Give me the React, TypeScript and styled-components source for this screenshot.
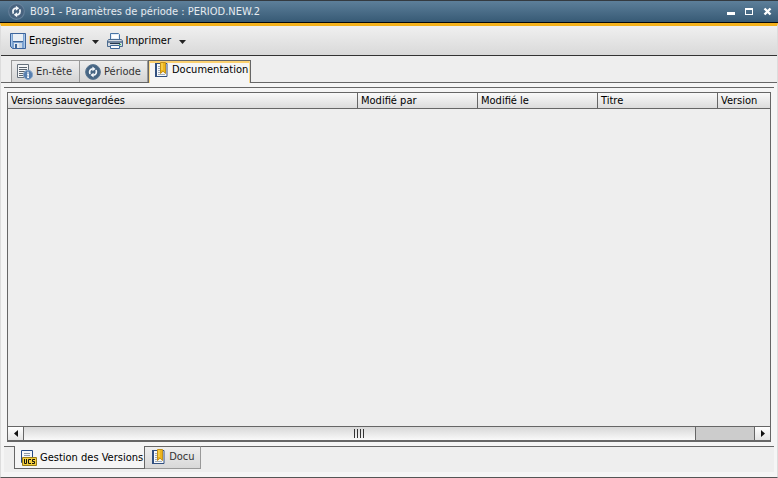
import React from "react";
import styled, { createGlobalStyle } from "styled-components";

const GlobalStyle = createGlobalStyle`
  * { box-sizing: border-box; }
  html, body { margin: 0; padding: 0; }
  body, button {
    font-family: "DejaVu Sans Condensed", "DejaVu Sans", Tahoma, sans-serif;
    font-stretch: condensed;
    font-size: 11px;
    line-height: 14px;
    color: #000;
  }
  svg { display: block; flex: none; }
`;

const Window = styled.div`
  display: flex;
  flex-direction: column;
  min-height: 100vh;
  background: #f5f5f5;
`;

const TitleBar = styled.header`
  display: flex;
  align-items: center;
  height: 23px;
  padding: 0 4px 0 8px;
  border-top: 1px solid #343a40;
  border-bottom: 1px solid #05080b;
  background: linear-gradient(#5d7f9a, #375a75);
`;

const Title = styled.h1`
  flex: 1;
  margin: 0 0 0 5px;
  font-size: 11px;
  font-weight: 400;
  line-height: 14px;
  color: #e6ebf0;
  white-space: nowrap;
`;

const WindowControls = styled.div`
  display: flex;
  gap: 6px;
`;

const WindowButton = styled.button`
  display: flex;
  align-items: flex-start;
  width: 12px;
  height: 16px;
  padding: 0;
  border: 0;
  background: none;
`;

const Frame = styled.div`
  display: flex;
  flex-direction: column;
  flex: 1;
  border: 1px solid #dcdcdc;
  border-top: 3px solid #f3b11b;
  border-bottom: 1px solid #555;
`;

const ToolBar = styled.div`
  display: flex;
  align-items: center;
  height: 30px;
  padding-left: 9px;
  border-bottom: 1px solid #333;
  background: linear-gradient(#f0f0f0, #d9d9d9);
`;

const ToolButton = styled.button`
  display: flex;
  align-items: center;
  gap: 3px;
  height: 22px;
  padding: 0;
  border: 0;
  background: none;
  white-space: nowrap;
`;

const MenuButton = styled.button`
  display: grid;
  place-items: center;
  width: 23px;
  height: 22px;
  padding: 2px 0 0;
  border: 0;
  background: none;
`;

const TopTabs = styled.div`
  display: flex;
  align-items: stretch;
  height: 27px;
  padding: 4px 0 0 10px;
  border-bottom: 1px solid #666;
  background: #eee;
`;

const TopTab = styled.button<{ $active?: boolean; $width: number }>`
  display: flex;
  align-items: center;
  gap: ${(p) => (p.$active ? 4 : 3)}px;
  width: ${(p) => p.$width}px;
  height: ${(p) => (p.$active ? 23 : 22)}px;
  padding: ${(p) => (p.$active ? "0 0 4px 6px" : "1px 0 0 5px")};
  border: 1px solid ${(p) => (p.$active ? "#666" : "#999")};
  border-left-width: ${(p) => (p.$active ? 1 : 0)}px;
  border-bottom: 0;
  background: ${(p) => (p.$active ? "#f5f5f5" : "linear-gradient(#eee, #d4d4d4)")};
  box-shadow: ${(p) =>
    p.$active ? "inset 1px 0 #fbd98b, inset -1px 0 #fbd98b, inset 0 2px #fbd070" : "none"};
  color: ${(p) => (p.$active ? "#000" : "#333")};
  white-space: nowrap;
  &:first-child { border-left-width: 1px; }
`;

const Body = styled.main`
  display: flex;
  flex-direction: column;
  flex: 1;
  margin: 4px 3px 5px;
`;

const Panel = styled.section`
  display: flex;
  flex: 1;
  padding: 4px 3px;
  border-top: 1px solid #666;
  border-bottom: 1px solid #666;
`;

const Grid = styled.div`
  display: flex;
  flex-direction: column;
  flex: 1;
  border: 1px solid #666;
  border-bottom-width: 2px;
  background: #eee;
`;

const VersionsTable = styled.table`
  width: 100%;
  table-layout: fixed;
  border-collapse: separate;
  border-spacing: 0;
`;

const HeadCell = styled.th<{ $width?: number }>`
  width: ${(p) => (p.$width ? `${p.$width}px` : "auto")};
  height: 16px;
  padding: 1px 3px 0;
  border-right: 1px solid #666;
  border-bottom: 1px solid #666;
  background: linear-gradient(#f9f9f9, #dcdcdc);
  font-weight: 400;
  text-align: left;
  white-space: nowrap;
  &:last-child { border-right: 0; }
`;

const Rows = styled.div`
  flex: 1;
`;

const ScrollBar = styled.div`
  display: flex;
  height: 14px;
  border-top: 1px solid #666;
  background: #ccc;
`;

const ScrollButton = styled.button`
  display: grid;
  place-items: center;
  width: 16px;
  padding: 0;
  border: 0;
  border-right: 1px solid #666;
  background: linear-gradient(#fff, #e4e4e4);
  &:last-child {
    border-right: 0;
    border-left: 1px solid #666;
  }
`;

const ScrollTrack = styled.div`
  flex: 1;
`;

const Thumb = styled.div`
  display: flex;
  align-items: center;
  justify-content: center;
  gap: 2px;
  width: 92%;
  height: 100%;
  border-right: 1px solid #666;
  background: linear-gradient(#d8d8d8, #f9f9f9);
`;

const Grip = styled.span`
  width: 1px;
  height: 9px;
  background: #333;
`;

const BottomTabs = styled.div`
  display: flex;
  align-items: flex-start;
  margin-top: -1px;
  padding-left: 10px;
  padding-bottom: 3px;
  background: linear-gradient(transparent 1px, #eee 1px);
`;

const BottomTab = styled.button<{ $active?: boolean }>`
  display: flex;
  align-items: center;
  gap: ${(p) => (p.$active ? 3 : 4)}px;
  height: 23px;
  padding: ${(p) => (p.$active ? "2px 1px 0 6px" : "0 5px 1px 7px")};
  border: 1px solid ${(p) => (p.$active ? "#666" : "#999")};
  border-top: ${(p) => (p.$active ? "0" : "1px solid #666")};
  border-left-width: ${(p) => (p.$active ? 1 : 0)}px;
  background: ${(p) => (p.$active ? "#f5f5f5" : "linear-gradient(#eee, #d8d8d8)")};
  color: ${(p) => (p.$active ? "#000" : "#333")};
  white-space: nowrap;
`;

const SyncIcon = ({ size, disc, rim }: { size: number; disc: string; rim: string }) => (
  <svg width={size} height={size} viewBox="0 0 16 16">
    <circle cx="8" cy="8" r="7.4" fill={disc} stroke={rim} />
    <path d="M5 10C3.800 7.200 5.300 4.800 7.800 4.800M11 6c1.200 2.800-.3 5.200-2.800 5.200" fill="none" stroke="#f4f7fa" strokeWidth="1.700" />
    <path d="M7.400 2.500 10.600 5 7.400 7.300zM8.600 8.700 5.400 11 8.600 13.500z" fill="#f4f7fa" />
  </svg>
);

const SaveIcon = () => (
  <svg width="16" height="16" viewBox="0 0 16 16">
    <path d="M.5.5h15v15h-13l-2-2z" fill="#7da4d2" stroke="#3c649c" />
    <path d="M1.500 1v12M14.500 1v14" stroke="#a9c7e9" />
    <path d="M3 1h10v7H3z" fill="#e9eff5" />
    <path d="M3 8.500h10" stroke="#3b6295" />
    <path d="M4 10h8v5H4z" fill="#e4eaf1" />
    <path d="M5 11h2v4H5z" fill="#3d6699" />
    <path d="M9 10h3v5H9z" fill="#cbd7e4" />
  </svg>
);

const PrinterIcon = () => (
  <svg width="16" height="16" viewBox="0 0 16 16">
    <path d="M3.500.5h8l1 1v6h-9z" fill="#e3edf8" stroke="#4974a5" />
    <path d="M5 2h6v3H5z" fill="#fff" />
    <path d="M1.500 6.500h13l1 1.500v5.500H.5V8z" fill="#d3dae2" stroke="#4b6b90" />
    <path d="M1 8h14v2H1z" fill="#7287a0" />
    <path d="M12 11h2v1h-2z" fill="#35bd4b" />
    <path d="M3 10.500h10" stroke="#26384d" />
    <path d="M3.500 12.500h9v3h-9z" fill="#f8fafc" stroke="#3e6797" />
  </svg>
);

const HeaderIcon = () => (
  <svg width="16" height="16" viewBox="0 0 16 16">
    <path d="M.5.5h11v13H.5z" fill="#f5f6f7" stroke="#65707b" />
    <path d="M2 3.500h8M2 5.500h8M2 7.500h6M2 9.500h5M2 11.500h4" stroke="#59636e" />
    <circle cx="11" cy="10.800" r="4.600" fill="#587fae" stroke="#86a5c9" />
    <path d="M11 7.800v1.300M10 10.200h1.400l-.6 3.200H12" fill="none" stroke="#fff" strokeWidth="1.200" />
  </svg>
);

const BookIcon = () => (
  <svg width="13" height="16" viewBox="0 0 13 16">
    <path d="M1 1.500h11v13H1z" fill="#f6f8fb" stroke="#304f80" />
    <path d="M1 1v14" stroke="#304f80" strokeWidth="2" />
    <path d="M3 4.500h3M3 6.500h3M3 8.500h3M3 10.500h3M3 12.500h7" stroke="#a0acba" />
    <path d="M5.500.5h5v11L8 9.200l-2.500 2.300z" fill="#edb51b" stroke="#c1901b" />
    <path d="M7 1v7" stroke="#ffe46e" />
  </svg>
);

const VcsIcon = () => (
  <svg width="16" height="16" viewBox="0 0 16 16">
    <path d="M.5.5h11v12H.5z" fill="#f4f6f8" stroke="#244985" />
    <path d="M3 3.500h6M3 5.500h6" stroke="#8b98a7" />
    <path d="M1.500 7.500h14v8h-14z" fill="#f4cf3d" stroke="#9a7c17" />
    <path d="M3.500 9v4.500h2V9M10 9.500H7.500v4H10M14 9.500h-2.500v2h2v2H11" fill="none" stroke="#17150a" />
  </svg>
);

const DownArrow = () => (
  <svg width="7" height="4" viewBox="0 0 7 4">
    <path d="M0 0h7L3.500 4z" fill="#222" />
  </svg>
);

const columns = [
  { label: "Versions sauvegardées" },
  { label: "Modifié par", width: 120 },
  { label: "Modifié le", width: 120 },
  { label: "Titre", width: 120 },
  { label: "Version", width: 52 },
];

export default function App() {
  return (
    <>
      <GlobalStyle />
      <Window>
        <TitleBar>
          <SyncIcon size={17} disc="#48637f" rim="#65809a" />
          <Title>B091 - Paramètres de période : PERIOD.NEW.2</Title>
          <WindowControls>
            <WindowButton aria-label="Réduire">
              <svg width="12" height="12"><path d="M1 8h8v3H1z" fill="#fff" /></svg>
            </WindowButton>
            <WindowButton aria-label="Agrandir">
              <svg width="12" height="12"><path d="M1 4h8v7H1zM2 6v4h6V6z" fill="#fff" fillRule="evenodd" /></svg>
            </WindowButton>
            <WindowButton aria-label="Fermer">
              <svg width="12" height="12"><path d="m2.500 4.500 6 6m0-6-6 6" stroke="#fff" strokeWidth="2.400" /></svg>
            </WindowButton>
          </WindowControls>
        </TitleBar>
        <Frame>
          <ToolBar>
            <ToolButton><SaveIcon />Enregistrer</ToolButton>
            <MenuButton aria-label="Options d'enregistrement"><DownArrow /></MenuButton>
            <ToolButton><PrinterIcon />Imprimer</ToolButton>
            <MenuButton aria-label="Options d'impression"><DownArrow /></MenuButton>
          </ToolBar>
          <TopTabs role="tablist">
            <TopTab role="tab" $width={69}><HeaderIcon />En-tête</TopTab>
            <TopTab role="tab" $width={68}>
              <SyncIcon size={16} disc="#466583" rim="#5c7893" />Période
            </TopTab>
            <TopTab role="tab" aria-selected $active $width={103}><BookIcon />Documentation</TopTab>
          </TopTabs>
          <Body>
            <Panel>
              <Grid>
                <VersionsTable>
                  <thead>
                    <tr>
                      {columns.map((c) => (
                        <HeadCell key={c.label} scope="col" $width={c.width}>{c.label}</HeadCell>
                      ))}
                    </tr>
                  </thead>
                </VersionsTable>
                <Rows />
                <ScrollBar>
                  <ScrollButton aria-label="Défiler à gauche">
                    <svg width="4" height="7"><path d="M4 0v7L0 3.500z" fill="#111" /></svg>
                  </ScrollButton>
                  <ScrollTrack>
                    <Thumb><Grip /><Grip /><Grip /><Grip /></Thumb>
                  </ScrollTrack>
                  <ScrollButton aria-label="Défiler à droite">
                    <svg width="4" height="7"><path d="M0 0v7l4-3.500z" fill="#111" /></svg>
                  </ScrollButton>
                </ScrollBar>
              </Grid>
            </Panel>
            <BottomTabs role="tablist">
              <BottomTab role="tab" aria-selected $active><VcsIcon />Gestion des Versions</BottomTab>
              <BottomTab role="tab"><BookIcon />Docu</BottomTab>
            </BottomTabs>
          </Body>
        </Frame>
      </Window>
    </>
  );
}
